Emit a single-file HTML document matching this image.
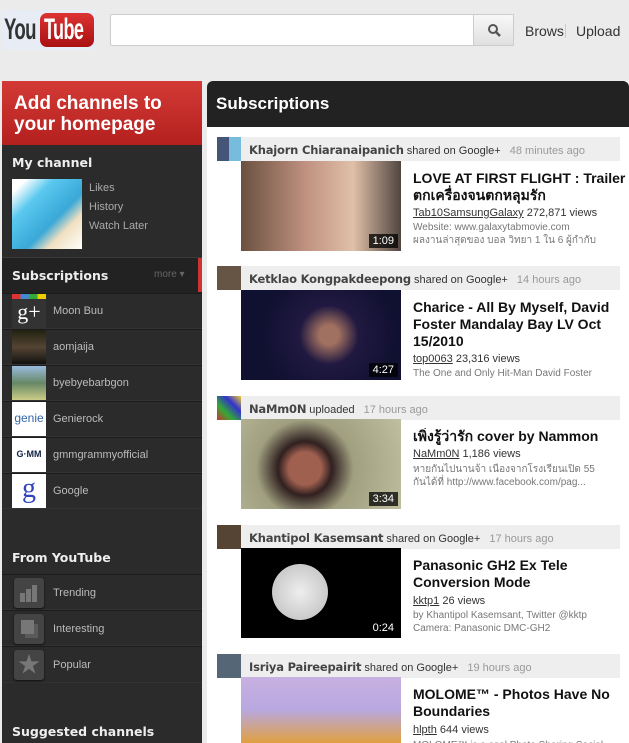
<!DOCTYPE html>
<html><head><meta charset="utf-8"><style>
*{margin:0;padding:0;box-sizing:border-box}
html,body{width:629px;height:743px;overflow:hidden}
body{background:#ebebeb;font-family:"Liberation Sans","Noto Sans CJK SC",sans-serif;position:relative}
.a{position:absolute}
.logo{left:2px;top:10px;width:93px;height:40px;background:#e8ecf4}
.you{left:4px;top:13px;font:bold 30px/34px "Liberation Sans",sans-serif;color:#333;letter-spacing:-1px;transform:scaleX(.62);transform-origin:left}
.tube{left:40px;top:13px;width:54px;height:34px;background:linear-gradient(#d33,#a11);border-radius:7px}
.tubet{left:44px;top:13px;font:bold 30px/34px "Liberation Sans",sans-serif;color:#fff;letter-spacing:-1px;transform:scaleX(.6);transform-origin:left}
.search{left:110px;top:14px;width:364px;height:32px;background:#fff;border:1px solid #ccc;border-radius:2px 0 0 2px}
.sbtn{left:473px;top:14px;width:41px;height:32px;background:linear-gradient(#f8f8f8,#e0e0e0);border:1px solid #ccc}
.nav{top:23px;font-size:14px;color:#333}
.side{left:2px;top:81px;width:200px;height:662px;background:#2b2b2b}
.red{left:2px;top:81px;width:200px;height:64px;background:linear-gradient(#d33a36,#b4201e);color:#fff;font:bold 19px/21px "Liberation Sans",sans-serif;padding:12px 12px}
.h{color:#eee;font:bold 12.5px "DejaVu Sans",sans-serif;left:12px}
.lk{color:#aaa;font-size:11px;left:89px}
.row{left:2px;width:200px;height:36px;border-top:1px solid #1c1c1c;border-bottom:1px solid #333}
.ic{left:12px;width:34px;height:34px}
.rt{left:53px;color:#bbb;font-size:11px}
.fy{left:14px;width:30px;height:30px;background:#444;border-radius:3px;box-shadow:0 1px 2px #111}
.main{left:207px;top:81px;width:422px;height:662px;background:#fff;border-radius:6px 0 0 0}
.mh{left:207px;top:81px;width:422px;height:46px;background:#222;border-radius:6px 6px 0 0;color:#fff;font:bold 17px "Liberation Sans",sans-serif;padding:13px 9px}
.bar{left:241px;width:379px;height:24px;background:#eee}
.av{left:217px;width:24px;height:24px}
.nm{left:249px;font-size:11px;color:#333;white-space:nowrap}
.nm b{font:bold 11.5px "DejaVu Sans",sans-serif;color:#444;letter-spacing:-0.2px}
.nm span{color:#999;margin-left:6px}
.th{left:241px;width:160px;height:90px}
.dur{right:3px;bottom:3px;background:rgba(0,0,0,.75);color:#fff;font-size:11px;padding:1px 4px}
.tt{left:413px;width:215px;font:bold 14px/17px "Liberation Sans","Noto Sans CJK SC",sans-serif;color:#111;white-space:nowrap;overflow:hidden}
.vw{left:413px;font-size:11px;color:#333}
.vw u{color:#333}
.ds{left:413px;font-size:10px;color:#777;line-height:13px;white-space:nowrap;width:215px;overflow:hidden}
</style></head><body>
<div class="a logo"></div>
<div class="a tube"></div>
<div class="a you">You</div>
<div class="a tubet">Tube</div>
<div class="a search"></div>
<div class="a sbtn"><svg width="41" height="32"><circle cx="19" cy="14" r="4" fill="none" stroke="#555" stroke-width="2"/><path d="M22 17l4 4" stroke="#555" stroke-width="2.5"/></svg></div>
<div class="a nav" style="left:525px">Brows</div>
<div class="a" style="left:565px;top:24px;width:1px;height:14px;background:#ccc"></div>
<div class="a nav" style="left:576px">Upload</div>

<div class="a side"></div>
<div class="a red">Add channels to<br>your homepage</div>
<div class="a h" style="top:155px">My channel</div>
<div class="a ic" style="top:179px;left:12px;width:70px;height:70px;background:linear-gradient(135deg,#fff 10%,#5ac8ee 30%,#3aa8d8 60%,#f0e0c0 75%,#fff)"></div>
<div class="a lk" style="top:182px">Likes</div>
<div class="a lk" style="top:201px">History</div>
<div class="a lk" style="top:220px">Watch Later</div>
<div class="a" style="left:2px;top:257px;width:200px;height:36px;background:#222;border-top:1px solid #3a3a3a"></div>
<div class="a" style="left:198px;top:258px;width:4px;height:34px;background:#c33"></div>
<div class="a h" style="top:268px">Subscriptions</div>
<div class="a" style="left:154px;top:269px;color:#666;font-size:10px">more ▾</div>

<div class="a row" style="top:293px"></div><div class="a ic" style="top:294px;background:#333"><div style="height:5px;background:linear-gradient(90deg,#d33 25%,#48c 25% 50%,#3a3 50% 75%,#ec0 75%)"></div><div style="color:#fff;font:22px 'Liberation Serif',serif;text-align:center;line-height:26px">g+</div></div><div class="a rt" style="top:305px">Moon Buu</div>
<div class="a row" style="top:329px"></div><div class="a ic" style="top:330px;background:linear-gradient(#221,#543 50%,#111)"></div><div class="a rt" style="top:341px">aomjaija</div>
<div class="a row" style="top:365px"></div><div class="a ic" style="top:366px;background:linear-gradient(#9bd,#686 50%,#cc8)"></div><div class="a rt" style="top:377px">byebyebarbgon</div>
<div class="a row" style="top:401px"></div><div class="a ic" style="top:402px;background:#fff;color:#36a;font-size:12px;text-align:center;line-height:32px">genie</div><div class="a rt" style="top:413px">Genierock</div>
<div class="a row" style="top:437px"></div><div class="a ic" style="top:438px;background:#fff;color:#124;font:bold 9px sans-serif;text-align:center;line-height:32px">G·MM</div><div class="a rt" style="top:449px">gmmgrammyofficial</div>
<div class="a row" style="top:473px"></div><div class="a ic" style="top:474px;background:#fff;color:#34b;font:28px 'Liberation Serif',serif;text-align:center;line-height:30px">g</div><div class="a rt" style="top:485px">Google</div>

<div class="a h" style="top:550px">From YouTube</div>
<div class="a row" style="top:574px"></div><div class="a fy" style="top:578px"><svg width="30" height="30"><rect x="6" y="15" width="5" height="9" fill="#777"/><rect x="12" y="11" width="5" height="13" fill="#777"/><rect x="18" y="7" width="5" height="17" fill="#777"/></svg></div><div class="a rt" style="top:587px">Trending</div>
<div class="a row" style="top:610px"></div><div class="a fy" style="top:614px"><svg width="30" height="30"><rect x="11" y="10" width="13" height="14" fill="#5a5a5a"/><rect x="7" y="6" width="13" height="14" fill="#777"/></svg></div><div class="a rt" style="top:623px">Interesting</div>
<div class="a row" style="top:646px;height:37px"></div><div class="a fy" style="top:650px;color:#777;font-size:22px;text-align:center;line-height:30px">★</div><div class="a rt" style="top:659px">Popular</div>
<div class="a h" style="top:724px">Suggested channels</div>

<div class="a main"></div>
<div class="a mh">Subscriptions</div>

<div class="a bar" style="top:137px"></div><div class="a av" style="top:137px;background:linear-gradient(90deg,#457 50%,#7bd 50%)"></div>
<div class="a nm" style="top:143px"><b>Khajorn Chiaranaipanich</b> shared on Google+ <span>48 minutes ago</span></div>
<div class="a th" style="top:161px;background:linear-gradient(90deg,#6a5040,#c09080 40%,#e0c0a8 70%,#504540)"><div class="a dur">1:09</div></div>
<div class="a tt" style="top:170px">LOVE AT FIRST FLIGHT : Trailer<br>ตกเครื่องจนตกหลุมรัก</div>
<div class="a vw" style="top:207px"><u>Tab10SamsungGalaxy</u> 272,871 views</div>
<div class="a ds" style="top:221px">Website: www.galaxytabmovie.com<br>ผลงานล่าสุดของ บอล วิทยา 1 ใน 6 ผู้กำกับ</div>

<div class="a bar" style="top:266px"></div><div class="a av" style="top:266px;background:#654"></div>
<div class="a nm" style="top:272px"><b>Ketklao Kongpakdeepong</b> shared on Google+ <span>14 hours ago</span></div>
<div class="a th" style="top:290px;background:radial-gradient(circle at 55% 50%,#a07060 10%,#201840 30%,#101030 70%)"><div class="a dur">4:27</div></div>
<div class="a tt" style="top:299px">Charice - All By Myself, David<br>Foster Mandalay Bay LV Oct<br>15/2010</div>
<div class="a vw" style="top:353px"><u>top0063</u> 23,316 views</div>
<div class="a ds" style="top:367px">The One and Only Hit-Man David Foster</div>

<div class="a bar" style="top:396px"></div><div class="a av" style="top:396px;background:linear-gradient(45deg,#c33,#3a3,#33c,#ec3)"></div>
<div class="a nm" style="top:402px"><b>NaMm0N</b> uploaded <span>17 hours ago</span></div>
<div class="a th" style="top:419px;background:radial-gradient(circle at 40% 55%,#a06050 15%,#302020 25%,#a0a080 45%,#c0c0a0)"><div class="a dur">3:34</div></div>
<div class="a tt" style="top:428px">เพิ่งรู้ว่ารัก cover by Nammon</div>
<div class="a vw" style="top:448px"><u>NaMm0N</u> 1,186 views</div>
<div class="a ds" style="top:463px">หายกันไปนานจ้า เนื่องจากโรงเรียนเปิด 55<br>กันได้ที่ http://www.facebook.com/pag...</div>

<div class="a bar" style="top:525px"></div><div class="a av" style="top:525px;background:#543"></div>
<div class="a nm" style="top:531px"><b>Khantipol Kasemsant</b> shared on Google+ <span>17 hours ago</span></div>
<div class="a th" style="top:548px;background:#000"><div class="a" style="left:31px;top:16px;width:56px;height:56px;border-radius:50%;background:radial-gradient(#eee,#bbb)"></div><div class="a dur" style="background:none">0:24</div></div>
<div class="a tt" style="top:557px">Panasonic GH2 Ex Tele<br>Conversion Mode</div>
<div class="a vw" style="top:595px"><u>kktp1</u> 26 views</div>
<div class="a ds" style="top:609px">by Khantipol Kasemsant, Twitter @kktp<br>Camera: Panasonic DMC-GH2</div>

<div class="a bar" style="top:654px"></div><div class="a av" style="top:654px;background:#567"></div>
<div class="a nm" style="top:660px"><b>Isriya Paireepairit</b> shared on Google+ <span>19 hours ago</span></div>
<div class="a th" style="top:677px;height:66px;background:linear-gradient(#c8b0e0,#b8a8e0 50%,#e0a040)"></div>
<div class="a tt" style="top:686px">MOLOME™ - Photos Have No<br>Boundaries</div>
<div class="a vw" style="top:724px"><u>hlpth</u> 644 views</div>
<div class="a ds" style="top:739px">MOLOME™ is a cool Photo Sharing Social</div>
</body></html>
